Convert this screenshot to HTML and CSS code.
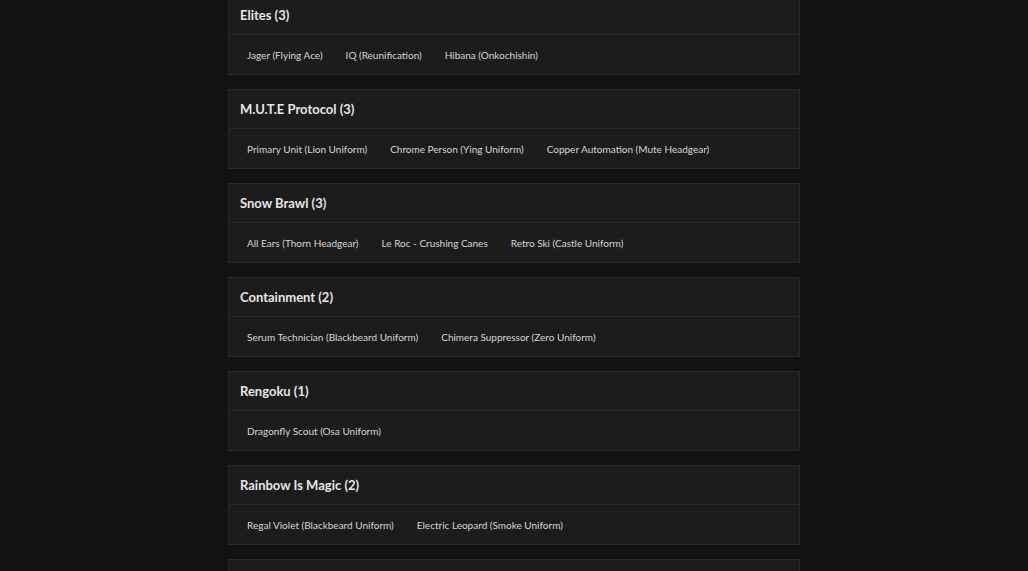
FILE: index.html
```html
<html>

<head>
	<meta charset="utf-8">
	<link rel="stylesheet" href="styles.css">
</head>

<body>

	<div class="sets">

		<div class="set">
			<div class="set-head">Elites (3)</div>
			<div class="set-items">
				<span class="item">Jager (Flying Ace)</span>
				<span class="item">IQ (Reunification)</span>
				<span class="item">Hibana (Onkochishin)</span>
			</div>
		</div>

		<div class="set">
			<div class="set-head">M.U.T.E Protocol (3)</div>
			<div class="set-items">
				<span class="item">Primary Unit (Lion Uniform)</span>
				<span class="item">Chrome Person (Ying Uniform)</span>
				<span class="item">Copper Automation (Mute Headgear)</span>
			</div>
		</div>

		<div class="set">
			<div class="set-head">Snow Brawl (3)</div>
			<div class="set-items">
				<span class="item">All Ears (Thorn Headgear)</span>
				<span class="item">Le Roc - Crushing Canes</span>
				<span class="item">Retro Ski (Castle Uniform)</span>
			</div>
		</div>

		<div class="set">
			<div class="set-head">Containment (2)</div>
			<div class="set-items">
				<span class="item">Serum Technician (Blackbeard Uniform)</span>
				<span class="item">Chimera Suppressor (Zero Uniform)</span>
			</div>
		</div>

		<div class="set">
			<div class="set-head">Rengoku (1)</div>
			<div class="set-items">
				<span class="item">Dragonfly Scout (Osa Uniform)</span>
			</div>
		</div>

		<div class="set">
			<div class="set-head">Rainbow Is Magic (2)</div>
			<div class="set-items">
				<span class="item">Regal Violet (Blackbeard Uniform)</span>
				<span class="item">Electric Leopard (Smoke Uniform)</span>
			</div>
		</div>

		<!-- next set starts below the fold -->
		<div class="set">
			<div class="set-head"></div>
			<div class="set-items"></div>
		</div>

	</div>

</body>

</html>
```

FILE: styles.css
```css
* {
	box-sizing: border-box;
}

html {
	overflow: hidden;
}

body {
	margin: 0;
	background: #121212;
	font-family: Lato, "Open Sans", sans-serif;
	color: #e8e8e8;
}

.sets {
	width: 572px;
	margin: -5px auto 0;
	display: flex;
	flex-direction: column;
	gap: 14px;
}

.set {
	background: #1c1c1c;
	border: 1px solid #292929;
}

.set-head {
	height: 39px;
	padding: 0 11px;
	display: flex;
	align-items: center;
	font-size: 13px;
	font-weight: 700;
	color: #e6e6e6;
	border-bottom: 1px solid #292929;
}

.set-items {
	height: 39px;
	padding: 0 18px;
	display: flex;
	align-items: center;
	gap: 23px;
	font-size: 10px;
	color: #d6d6d6;
}
```
